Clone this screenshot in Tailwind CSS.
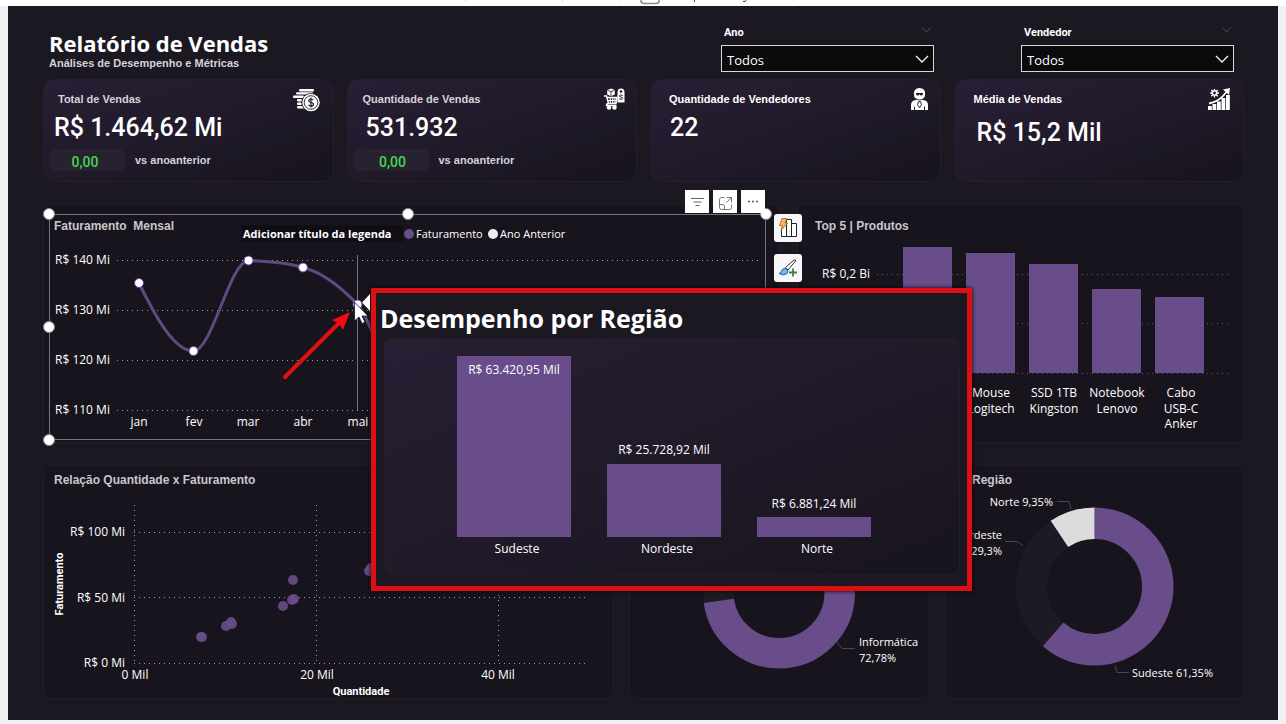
<!DOCTYPE html>
<html lang="pt-BR">
<head>
    <meta charset="UTF-8">
    <meta name="viewport" content="width=device-width, initial-scale=1.0">
    <title>Relatório de Vendas</title>
    <script src="https://cdn.jsdelivr.net/npm/@tailwindcss/browser@4"></script>
</head>
<body class="bg-[#f1f0f2] min-h-screen font-['Open_Sans','Noto_Sans',sans-serif] text-white overflow-x-hidden">
    <!-- Borda inferior da barra do editor -->
    <div class="bg-white h-[6px] overflow-hidden">
        <svg class="block mx-auto" width="360" height="6" viewBox="463 0 360 6" fill="none" stroke="#8a8a8a">
            <path d="M641 0v1q0 2.500 3 2.500h12q3 0 3-2.500v-1" stroke-width="1.500"/>
            <path d="M694.500 0v2M746 0q0 2-3 1.500" stroke="#444"/>
            <path d="M465.500 0v2M562.500 0v2M619.500 0v1M793.500 0v1" stroke="#ddd"/>
        </svg>
    </div>

    <main class="relative mx-2 bg-[#1b1822] pl-[35px] pr-[34px] pb-[21px]">
        <!-- Cabeçalho -->
        <header class="flex justify-between h-[73px] pl-[6px] pr-[10px]">
            <div class="pt-6">
                <h1 class="text-[22px] leading-[26px] font-bold">Relatório de Vendas</h1>
                <p class="font-['Liberation_Sans',sans-serif] text-[11px] leading-[14px] font-bold text-[#d5d3d8]">Análises de Desempenho e Métricas</p>
            </div>
            <div class="flex gap-[87px] pt-[19px]">
                <div class="w-[213px]">
                    <div class="flex items-start justify-between h-5 pl-[3px] pr-[2px]">
                        <label for="ano" class="font-[Roboto,sans-serif] text-[11px] leading-4 font-bold">Ano</label>
                        <svg class="mt-px" width="11" height="8" viewBox="0 0 11 8" fill="none" stroke="#55525c"><path d="M1 1.500l4.500 4.500l4.500-4.500"/></svg>
                    </div>
                    <div class="relative">
                        <select id="ano" class="appearance-none block w-full h-[27px] bg-[#0b0a0d] border border-[#d8d8d8] pl-[5px] pt-[3px] text-[13px] leading-5 rounded-none">
                            <option>Todos</option>
                        </select>
                        <svg class="absolute right-[5px] top-[10px] pointer-events-none" width="14" height="9" viewBox="0 0 14 9" fill="none" stroke="#eee" stroke-width="1.400"><path d="M1 1l6 6l6-6"/></svg>
                    </div>
                </div>
                <div class="w-[213px]">
                    <div class="flex items-start justify-between h-5 pl-[3px] pr-[2px]">
                        <label for="vendedor" class="font-[Roboto,sans-serif] text-[11px] leading-4 font-bold">Vendedor</label>
                        <svg class="mt-px" width="11" height="8" viewBox="0 0 11 8" fill="none" stroke="#55525c"><path d="M1 1.500l4.500 4.500l4.500-4.500"/></svg>
                    </div>
                    <div class="relative">
                        <select id="vendedor" class="appearance-none block w-full h-[27px] bg-[#0b0a0d] border border-[#d8d8d8] pl-[5px] pt-[3px] text-[13px] leading-5 rounded-none">
                            <option>Todos</option>
                        </select>
                        <svg class="absolute right-[5px] top-[10px] pointer-events-none" width="14" height="9" viewBox="0 0 14 9" fill="none" stroke="#eee" stroke-width="1.400"><path d="M1 1l6 6l6-6"/></svg>
                    </div>
                </div>
            </div>
        </header>

        <!-- Indicadores -->
        <section class="grid grid-cols-4 gap-[13px] font-[Roboto,sans-serif]">
            <div class="h-[103px] rounded-xl border border-[#231d2c] bg-linear-to-br from-[#291e34] via-[#201a2a] to-[#17131c] pt-[6px]">
                <div class="flex items-center justify-between h-[26px] pl-[14px] pr-3">
                    <h2 class="font-['Liberation_Sans',sans-serif] text-[11px] font-bold text-[#d5d3d8]">Total de Vendas</h2>
                    <svg class="overflow-visible" width="28" height="22" viewBox="0 0 28 22" fill="#fff">
                        <rect x="6" y="1" width="15" height="2.400" rx="1"/>
                        <rect x="3" y="4.200" width="17" height="2.400" rx="1"/>
                        <rect x="0" y="7.500" width="11" height="2.400" rx="1"/>
                        <rect x="4" y="11" width="5" height="2.400" rx="1"/>
                        <rect x="4" y="14.500" width="5" height="2.400" rx="1"/>
                        <rect x="4" y="18" width="8" height="2.400" rx="1"/>
                        <circle cx="18" cy="14.500" r="9.600" fill="#211a2a"/>
                        <circle cx="18" cy="14.500" r="8.700"/>
                        <circle cx="18" cy="14.500" r="6.800" fill="none" stroke="#211a2a" stroke-width=".9"/>
                        <path d="M20.300 12.300q-.6-1.300-2.300-1.300q-2.200 0-2.200 1.700q0 1.500 2.200 1.800q2.400.3 2.400 1.900q0 1.700-2.400 1.700q-1.800 0-2.400-1.400M18 9.500v10" fill="none" stroke="#211a2a" stroke-width="1.200"/>
                    </svg>
                </div>
                <p class="mt-[2px] pl-[10px] text-[25px] leading-7 font-medium">R$ 1.464,62 Mi</p>
                <div class="flex items-center gap-[10px] mt-[7px] pl-[5px]">
                    <span class="w-[76px] h-[22px] rounded-md bg-[#26222f] pr-1 text-center text-[14px] leading-[26px] font-medium text-[#45d84f]">0,00</span>
                    <span class="font-['Liberation_Sans',sans-serif] text-[11px] font-bold text-[#d5d3d8]">vs anoanterior</span>
                </div>
            </div>
            <div class="h-[103px] rounded-xl border border-[#231d2c] bg-linear-to-br from-[#291e34] via-[#201a2a] to-[#17131c] pt-[6px]">
                <div class="flex items-center justify-between h-[26px] pl-[15px] pr-[10px]">
                    <h2 class="font-['Liberation_Sans',sans-serif] text-[11px] font-bold text-[#d5d3d8]">Quantidade de Vendas</h2>
                    <svg width="22" height="22" viewBox="0 0 22 22" fill="#fff">
                        <path d="M7 .5l3.800 1.500v4.500l-3.800 1.700l-3.800-1.700v-4.500z"/>
                        <path d="M3.500 2.300l3.500 1.400l3.500-1.400M7 3.700v4.500" fill="none" stroke="#211a2a" stroke-width=".8"/>
                        <path d="M0 8h2.500l2 7.500h7.500l1-6h-10" fill="none" stroke="#fff" stroke-width="1.500"/>
                        <path d="M3.500 12.500h9M6.300 9.500v6M8.800 9.500v6M11 9.500v6" stroke="#fff" stroke-width="1.100"/>
                        <path d="M4.500 15.500q-2 0-2 2h10" fill="none" stroke="#fff" stroke-width="1.500"/>
                        <circle cx="5" cy="19.500" r="2.200"/><circle cx="10.500" cy="19.500" r="2.200"/>
                        <path d="M13.500 4.500q0-4 3.500-4t3.500 4v10h-7z"/>
                        <circle cx="17" cy="3.500" r="1.300" fill="#211a2a"/>
                        <path d="M18.700 7.500q-3.200-1.500-3.200.4q0 1 1.600 1.200q1.600.3 1.600 1.300q0 1.700-3.400.5" fill="none" stroke="#211a2a"/>
                    </svg>
                </div>
                <p class="mt-[2px] pl-[18px] text-[25px] leading-7 font-medium">531.932</p>
                <div class="flex items-center gap-[10px] mt-[7px] pl-[5px]">
                    <span class="w-[76px] h-[22px] rounded-md bg-[#26222f] pl-1 text-center text-[14px] leading-[26px] font-medium text-[#45d84f]">0,00</span>
                    <span class="font-['Liberation_Sans',sans-serif] text-[11px] font-bold text-[#d5d3d8]">vs anoanterior</span>
                </div>
            </div>
            <div class="h-[103px] rounded-xl border border-[#231d2c] bg-linear-to-br from-[#291e34] via-[#201a2a] to-[#17131c] pt-[6px]">
                <div class="flex items-center justify-between h-[26px] pl-[18px] pr-[12px]">
                    <h2 class="font-['Liberation_Sans',sans-serif] text-[11px] font-bold">Quantidade de Vendedores</h2>
                    <svg width="17" height="22" viewBox="0 0 17 22" fill="#fff">
                        <path d="M3 6.500q-.5-6.500 5.500-6.500t5.500 6.500q0 5-5.500 5t-5.500-5z"/>
                        <path d="M5 4.900h7v1.200q-.5 1.500-1.700 1.500t-1.800-1.300q-.5 1.300-1.800 1.300t-1.700-1.500z" fill="#211a2a"/>
                        <path d="M0 22v-5q0-4 4-4.700l2-.8h5l2 .8q4 .7 4 4.700v5z"/>
                        <path d="M4.500 10.500q1.500 1.600 4 1.600t4-1.600" fill="none" stroke="#211a2a" stroke-width=".7"/>
                        <path d="M7.500 13.700l-1 3l2 3l2-3l-1-3zM3.500 18.500v3.500M13.500 18.500v3.500" fill="none" stroke="#211a2a"/>
                    </svg>
                </div>
                <p class="mt-[2px] pl-[19px] text-[25px] leading-7 font-medium">22</p>
            </div>
            <div class="h-[103px] rounded-xl border border-[#231d2c] bg-linear-to-br from-[#291e34] via-[#201a2a] to-[#17131c] pt-[6px]">
                <div class="flex items-center justify-between h-[26px] pl-[19px] pr-[13px]">
                    <h2 class="font-['Liberation_Sans',sans-serif] text-[11px] font-bold">Média de Vendas</h2>
                    <svg width="22" height="22" viewBox="0 0 22 22" fill="#fff">
                        <path d="M0 18h3.800v4h-3.800zM4.500 16h3.800v6h-3.800zM9 13.500h3.800v8.500h-3.800zM13.500 10h3.800v12h-3.800zM18 7h3.800v15h-3.800z"/>
                        <path d="M1 15.500q10-1.500 17.500-11.500" fill="none" stroke="#fff" stroke-width="1.800"/>
                        <path d="M15 1.500l7-1.500l-1 7z"/>
                        <circle cx="6.500" cy="5" r="2.200" fill="none" stroke="#fff" stroke-width="1.500"/>
                        <path d="M6.500 1v1.500M6.500 7.500v2M2.200 5h1.800M9 5h2M3.300 2l1.300 1.300M9.700 2l-1.300 1.300M3.300 8.300l1.300-1.300M9.700 8.300l-1.300-1.300" stroke="#fff" stroke-width="1.300"/>
                    </svg>
                </div>
                <p class="mt-[7px] pl-[22px] text-[25px] leading-7 font-medium">R$ 15,2 Mil</p>
            </div>
        </section>

        <!-- Faturamento e produtos -->
        <section class="grid grid-cols-[737fr_447fr] gap-[17px] mt-[22px]">
            <div class="relative rounded-lg bg-[#18141d] ring-1 ring-inset ring-[#211d28]">
                <svg class="block w-full overflow-visible" viewBox="43 204 737 239" fill="#fff" font-size="12">
                    <path d="M49.500 439.500V214.500H765.500V439.500z" fill="none" stroke="#77747c"/>
                    <text x="54" y="230" font-family="Liberation Sans, sans-serif" font-weight="700" fill="#c9c7cc" xml:space="preserve">Faturamento  Mensal</text>
                    <rect x="242" y="225" width="161" height="17" fill="#100d14"/>
                    <g font-size="11">
                        <text x="243" y="238" font-size="11" font-weight="700">Adicionar título da legenda</text>
                        <circle cx="409" cy="234" r="5" fill="#684d8a"/>
                        <text x="416" y="238">Faturamento</text>
                        <circle cx="493" cy="234" r="5" fill="#eee"/>
                        <text x="500" y="238">Ano Anterior</text>
                    </g>
                    <g stroke="#99969e" stroke-dasharray="1 4">
                        <path d="M117 260.500H760M117 310.500H760M117 360.500H760M117 410.500H760"/>
                    </g>
                    <text x="55" y="264">R$ 140 Mi</text>
                    <text x="55" y="314">R$ 130 Mi</text>
                    <text x="55" y="364">R$ 120 Mi</text>
                    <text x="55" y="414">R$ 110 Mi</text>
                    <path d="M357.500 255V410" stroke="#77747c"/>
                    <path d="M139 283C157 320 175 351 193.500 351C212 351 230 261 248.500 260.500C266 261 285 262 303 267.500C321 272 339 285 357.500 304.500C366 315 372 330 378 350" fill="none" stroke="#5f4a80" stroke-width="3"/>
                    <g stroke="#5a41a0">
                        <circle cx="139" cy="283" r="4.500"/>
                        <circle cx="193.500" cy="351" r="4.500"/>
                        <circle cx="248.500" cy="260.500" r="4.500"/>
                        <circle cx="303" cy="267.500" r="4.500"/>
                        <circle cx="357.500" cy="304.500" r="4.500"/>
                    </g>
                    <g text-anchor="middle">
                        <text x="139" y="426">jan</text>
                        <text x="194" y="426">fev</text>
                        <text x="248" y="426">mar</text>
                        <text x="303" y="426">abr</text>
                        <text x="358" y="426">mai</text>
                    </g>
                    <g stroke="#8a878f">
                        <circle cx="49" cy="214" r="5.500"/>
                        <circle cx="408" cy="214" r="5.500"/>
                        <circle cx="49" cy="327" r="5.500"/>
                        <circle cx="49" cy="440" r="5.500"/>
                        <circle cx="766" cy="214" r="5.500"/>
                    </g>
                </svg>
                <!-- Ações do visual selecionado -->
                <div class="absolute right-[15px] -top-[14px] flex gap-1">
                    <button class="w-6 h-[23px] bg-white flex items-center justify-center" aria-label="Filtros">
                        <svg width="13" height="10" viewBox="0 0 13 10" stroke="#666"><path d="M0 1.500h13M2.500 5h8M4.500 8.500h4"/></svg>
                    </button>
                    <button class="w-6 h-[23px] bg-white flex items-center justify-center" aria-label="Modo de foco">
                        <svg class="mt-1" width="13" height="13" viewBox="0 0 13 13" fill="none" stroke="#777"><path d="M5.500.5h-3q-2 0-2 2v8q0 2 2 2h8q2 0 2-2v-3M7.500.5h5v5M12.500.5l-5 5M.5 7.500h3q2 0 2 2v3"/></svg>
                    </button>
                    <button class="w-6 h-[23px] bg-white flex items-center justify-center" aria-label="Mais opções">
                        <svg width="12" height="3" viewBox="0 0 12 3" fill="#666"><circle cx="2" cy="1.500" r="1.100"/><circle cx="6" cy="1.500" r="1.100"/><circle cx="10" cy="1.500" r="1.100"/></svg>
                    </button>
                </div>
                <div class="absolute -right-[22px] top-[10px] flex flex-col gap-3">
                    <button class="size-7 rounded-[3px] bg-[#f7f6f8] flex items-center justify-center" aria-label="Criar visual">
                        <svg width="20" height="20" viewBox="0 0 20 20" fill="#fff" stroke="#222">
                            <path d="M3.500 11.500v7h15v-13h-5v13M8.500 1.500h5v17M8.500 1.500v17"/>
                            <path d="M4 .5h5l-2 4.500h2.500l-6.500 7.500l1.300-5h-2.800z" fill="#f5b36b" stroke="#b96f26"/>
                        </svg>
                    </button>
                    <button class="size-7 rounded-[3px] bg-[#f7f6f8] flex items-center justify-center" aria-label="Formatar visual">
                        <svg width="20" height="18" viewBox="0 0 20 18" fill="none">
                            <path d="M7.500 8.500l8.500-7.500q2-.8 1.500 1l-7.500 9z" fill="#fff" stroke="#333"/>
                            <path d="M1 14.500q2-.5 3-3.500q2-3 4.500-1q2.500 2 .5 4.500q-3 3-8 0z" fill="#74b7e4" stroke="#235f96"/>
                            <path d="M15 9.500v8M11 13.500h8" stroke="#3d7d4d" stroke-width="1.800"/>
                        </svg>
                    </button>
                </div>
            </div>

            <div class="rounded-lg bg-[#18141d] ring-1 ring-inset ring-[#211d28]">
                <svg class="block w-full" viewBox="797 204 447 239" fill="#fff" font-size="12">
                    <text x="815" y="230" font-family="Liberation Sans, sans-serif" font-weight="700" fill="#c9c7cc">Top 5 | Produtos</text>
                    <text x="822" y="278">R$ 0,2 Bi</text>
                    <path d="M877 274.500H1231M877 323.500H1231M877 373.500H1231" stroke="#5d5a64" stroke-dasharray="1 4"/>
                    <g fill="#684d8a">
                        <rect x="903" y="247" width="49" height="126"/>
                        <rect x="966" y="253" width="49" height="120"/>
                        <rect x="1029" y="264" width="49" height="109"/>
                        <rect x="1092" y="289" width="49" height="84"/>
                        <rect x="1155" y="297" width="49" height="76"/>
                    </g>
                    <g text-anchor="middle">
                        <text x="991" y="397">Mouse</text><text x="991" y="413">Logitech</text>
                        <text x="1054" y="397">SSD 1TB</text><text x="1054" y="413">Kingston</text>
                        <text x="1117" y="397">Notebook</text><text x="1117" y="413">Lenovo</text>
                        <text x="1181" y="397">Cabo</text><text x="1181" y="413">USB-C</text><text x="1181" y="428">Anker</text>
                    </g>
                </svg>
            </div>
        </section>

        <!-- Dispersão e roscas -->
        <section class="grid grid-cols-[571fr_301fr_299fr] gap-[15px] mt-[22px]">
            <div class="rounded-lg bg-[#18141d] ring-1 ring-inset ring-[#211d28]">
                <svg class="block w-full" viewBox="43 465 571 234" fill="#fff" font-size="12">
                    <text x="54" y="484" font-family="Liberation Sans, sans-serif" font-weight="700" fill="#c9c7cc">Relação Quantidade x Faturamento</text>
                    <path d="M134 532.500H587M134 597.500H587M134 663.500H587M134.500 505V663M316.500 505V663M498.500 505V663" stroke="#99969e" stroke-dasharray="1 4"/>
                    <g text-anchor="end">
                        <text x="125" y="536">R$ 100 Mi</text>
                        <text x="125" y="602">R$ 50 Mi</text>
                        <text x="125" y="667">R$ 0 Mi</text>
                    </g>
                    <g text-anchor="middle">
                        <text x="135" y="679">0 Mil</text>
                        <text x="317" y="679">20 Mil</text>
                        <text x="498" y="679">40 Mil</text>
                        <g font-family="Roboto, sans-serif" font-size="11" font-weight="700">
                            <text x="361" y="695">Quantidade</text>
                            <text transform="translate(63 584) rotate(-90)">Faturamento</text>
                        </g>
                    </g>
                    <g fill="#684d8a" fill-opacity=".9">
                        <circle cx="202" cy="637" r="5"/><circle cx="201" cy="637" r="5"/>
                        <circle cx="226" cy="626" r="5"/><circle cx="232" cy="624" r="5"/><circle cx="231" cy="622" r="5"/>
                        <circle cx="283" cy="606" r="5"/><circle cx="292" cy="600" r="5"/><circle cx="294" cy="599" r="5"/>
                        <circle cx="293" cy="580" r="5"/>
                        <circle cx="369" cy="571" r="5"/><circle cx="371" cy="568" r="5"/>
                    </g>
                </svg>
            </div>

            <div class="rounded-lg bg-[#18141d] ring-1 ring-inset ring-[#211d28]">
                <svg class="block w-full" viewBox="629 465 301 234" fill="#fff" font-size="11">
                    <g fill="none" stroke-width="30.500" transform="rotate(-90 779 592.500)">
                        <circle cx="779" cy="592.500" r="60.750" stroke="#1c1a25"/>
                        <circle cx="779" cy="592.500" r="60.750" stroke="#684d8a" pathLength="100" stroke-dasharray="72.780 27.220"/>
                    </g>
                    <path d="M837 642l5 6.500h13" fill="none" stroke="#4a474f"/>
                    <text x="859" y="646">Informática</text>
                    <text x="859" y="662">72,78%</text>
                </svg>
            </div>

            <div class="rounded-lg bg-[#18141d] ring-1 ring-inset ring-[#211d28]">
                <svg class="block w-full" viewBox="945 465 299 234" fill="#fff" font-size="11">
                    <text x="972" y="484" font-family="Liberation Sans, sans-serif" font-size="12" font-weight="700" fill="#c9c7cc">Região</text>
                    <g fill="none" stroke-width="31.500" transform="rotate(-90 1094.500 586.500)">
                        <circle cx="1094.500" cy="586.500" r="63.250" stroke="#1c1a25"/>
                        <circle cx="1094.500" cy="586.500" r="63.250" stroke="#684d8a" pathLength="100" stroke-dasharray="61.350 38.650"/>
                        <circle cx="1094.500" cy="586.500" r="63.250" stroke="#dcdcdc" pathLength="100" stroke-dasharray="9.350 90.650" stroke-dashoffset="-90.650"/>
                    </g>
                    <path d="M1057 501.500h12l2 8M1005 541.500h12l6 4M1115 665l2 7.500h12" fill="none" stroke="#4a474f"/>
                    <g text-anchor="end">
                        <text x="1053" y="506">Norte 9,35%</text>
                        <text x="1002" y="539">Nordeste</text>
                        <text x="1002" y="555">29,3%</text>
                    </g>
                    <text x="1132" y="677">Sudeste 61,35%</text>
                </svg>
            </div>
        </section>

        <!-- Dica de ferramenta com o detalhe por região -->
        <div class="absolute left-[363px] top-[282px] w-[601px] border-[5px] border-[#dc0f12] bg-[#1b1822] shadow-[0_0_4px_#000] pl-[8px] pr-[7px] pb-[11px]">
            <h2 class="h-[45px] pt-[9px] -ml-1 text-[25px] leading-[32px] font-bold">Desempenho por Região</h2>
            <div class="rounded-lg border border-[#231e2d] bg-linear-to-br from-[#291e34] via-[#201a29] to-[#18141d]">
                <svg class="block w-full" viewBox="385 339 574 235" fill="#fff" font-size="12" text-anchor="middle">
                    <g fill="#684d8a">
                        <rect x="457" y="356" width="114" height="181"/>
                        <rect x="607" y="464" width="114" height="73"/>
                        <rect x="757" y="517" width="114" height="20"/>
                    </g>
                    <text x="514" y="374">R$ 63.420,95 Mil</text>
                    <text x="664" y="454">R$ 25.728,92 Mil</text>
                    <text x="814" y="508">R$ 6.881,24 Mil</text>
                    <text x="517" y="553">Sudeste</text>
                    <text x="667" y="553">Nordeste</text>
                    <text x="817" y="553">Norte</text>
                </svg>
            </div>
        </div>

        <!-- Seta, ponta da dica e cursor -->
        <svg class="absolute left-[272px] top-[284px] pointer-events-none" width="92" height="92" viewBox="280 290 92 92">
            <path d="M370 294v17l-8-8.500z" fill="#fff"/>
            <path d="M285 377L338 324" stroke="#e01013" stroke-width="4" stroke-linecap="round"/>
            <path d="M350 312l-7 18l-4-6l-7-4z" fill="#f00c0f"/>
            <path d="M354.500 302v19l4.500-4l3 6.500l3-1.300l-3-6.200h6z" fill="#fff" stroke="#111" stroke-width=".8"/>
        </svg>
    </main>
</body>
</html>
